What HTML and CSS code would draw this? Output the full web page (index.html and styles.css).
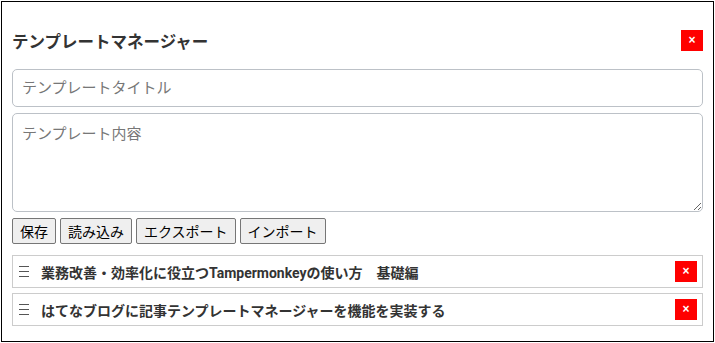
FILE: index.html
```html
<!DOCTYPE html>
<html lang="ja">
<head>
    <meta charset="UTF-8">
    <meta name="viewport" content="width=device-width, initial-scale=1.0">
    <title>テンプレートマネージャー</title>
    <link rel="stylesheet" href="styles.css">
</head>
<body>
    <div class="template-manager">
        <div class="tm-header">
            <h3>テンプレートマネージャー</h3>
            <button class="tm-close">×</button>
        </div>

        <input type="text" class="tm-title" placeholder="テンプレートタイトル">
        <textarea class="tm-content" placeholder="テンプレート内容"></textarea>

        <div class="tm-actions">
            <button class="btn">保存</button>
            <button class="btn">読み込み</button>
            <button class="btn">エクスポート</button>
            <button class="btn">インポート</button>
        </div>

        <ul class="tm-list">
            <li class="tm-item">
                <svg class="handle" width="10" height="11" viewBox="0 0 10 11"><path d="M0 0.5h10M0 5.5h10M0 10.5h10" stroke="#555" stroke-width="1"/></svg>
                <span class="tm-name">業務改善・効率化に役立つTampermonkeyの使い方　基礎編</span>
                <button class="tm-delete">×</button>
            </li>
            <li class="tm-item">
                <svg class="handle" width="10" height="11" viewBox="0 0 10 11"><path d="M0 0.5h10M0 5.5h10M0 10.5h10" stroke="#555" stroke-width="1"/></svg>
                <span class="tm-name">はてなブログに記事テンプレートマネージャーを機能を実装する</span>
                <button class="tm-delete">×</button>
            </li>
        </ul>
    </div>
</body>
</html>
```

FILE: styles.css
```css
* {
    box-sizing: border-box;
}

body {
    margin: 0;
    font-family: Roboto, 'Noto Sans CJK JP', sans-serif;
    color: #333;
    background: #fff;
}

.template-manager {
    margin: 1px;
    width: 713px;
    border: 1px solid #000;
    padding: 10px 10px 10px;
    background: #fff;
}

.tm-header {
    display: flex;
    justify-content: space-between;
    align-items: center;
    margin: 18px 0;
    height: 21px;
}

.tm-header h3 {
    margin: 0;
    font-size: 16.5px;
    font-weight: bold;
    color: #333;
}

.tm-close,
.tm-delete {
    width: 22px;
    height: 21px;
    padding: 0;
    border: none;
    background: #f00;
    color: #fff;
    font-size: 12px;
    font-weight: bold;
    line-height: 21px;
    cursor: pointer;
}

.tm-title,
.tm-content {
    display: block;
    width: 100%;
    border: 1px solid #bcc1c7;
    border-radius: 5px;
    font-family: inherit;
    font-size: 15px;
    color: #333;
}

.tm-title {
    height: 38px;
    padding: 0 9px;
    margin-bottom: 6px;
}

.tm-content {
    height: 99px;
    padding: 8px 9px;
    margin-bottom: 6px;
    resize: vertical;
}

.tm-title::placeholder,
.tm-content::placeholder {
    color: #777;
}

.tm-actions {
    display: flex;
    gap: 4px;
    margin-bottom: 11px;
}

.btn {
    font-family: inherit;
    font-size: 14px;
    height: 26px;
    padding: 1px 7px;
    color: #000;
    background: #efefef;
    border: 1px solid #767676;
    border-radius: 2px;
    cursor: pointer;
}

.tm-list {
    list-style: none;
    margin: 0;
    padding: 0;
}

.tm-item {
    display: flex;
    align-items: center;
    height: 33px;
    padding: 5px;
    margin-bottom: 5px;
    border: 1px solid #ccc;
}

.handle {
    flex: none;
    margin: 0 12px 0 1px;
}

.tm-name {
    flex: 1;
    font-size: 14px;
    font-weight: bold;
    color: #333;
}
```
